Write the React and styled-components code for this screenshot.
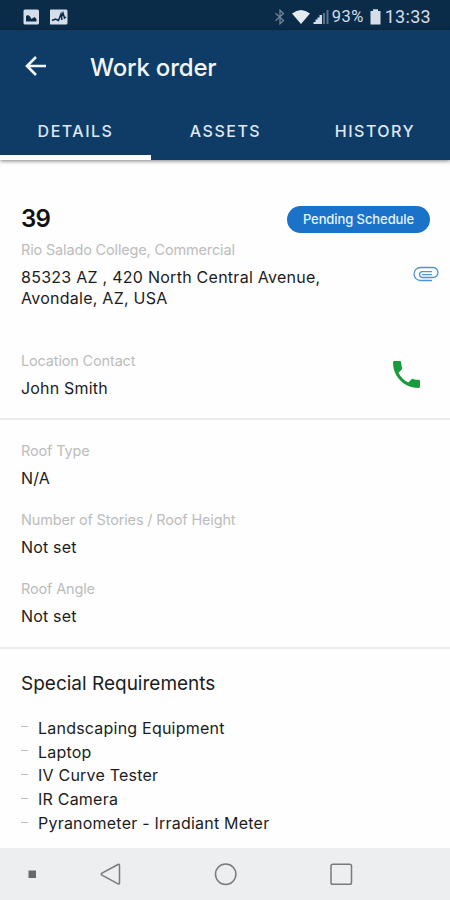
import React from 'react';
import styled, { createGlobalStyle } from 'styled-components';

const GlobalStyle = createGlobalStyle`
  * {
    box-sizing: border-box;
  }
  body {
    margin: 0;
    background-color: #fefefe;
    font-family: Inter, Roboto, sans-serif;
  }
`;

const Screen = styled.div`
  width: 450px;
  height: 900px;
  display: flex;
  flex-direction: column;
  overflow: hidden;
  background-color: #fefefe;
`;

const StatusBar = styled.div`
  height: 30px;
  flex: none;
  display: flex;
  align-items: center;
  justify-content: space-between;
  padding: 3px 19px 0 23px;
  background-color: #0a2c49;
  color: #d5dde8;
`;

const StatusGroup = styled.div`
  display: flex;
  align-items: center;
  gap: ${(props) => props.$gap}px;
`;

const StatusText = styled.span`
  font-family: Roboto, sans-serif;
  font-size: ${(props) => props.$size}px;
  letter-spacing: ${(props) => props.$spacing || 0}px;
  line-height: 20px;
`;

const Header = styled.header`
  height: 130px;
  flex: none;
  position: relative;
  background-color: #0e3c66;
  box-shadow: 0 1px 4px rgba(0, 0, 0, 0.5);
`;

const Toolbar = styled.div`
  height: 74px;
  display: flex;
  align-items: center;
  padding-left: 24px;
  color: #f3f6fb;
`;

const BackButton = styled.button`
  display: flex;
  width: 66px;
  padding: 0;
  border: none;
  background: none;
  color: inherit;
`;

const Title = styled.h1`
  margin: 0;
  padding-top: 1px;
  font-size: 24px;
  line-height: 30px;
  font-weight: 500;
  letter-spacing: -0.2px;
`;

const Tabs = styled.nav`
  height: 56px;
  display: grid;
  grid-template-columns: 151px 149px 150px;
`;

const Tab = styled.div`
  display: flex;
  align-items: center;
  justify-content: center;
  padding-top: 3px;
  border-bottom: 5px solid ${(props) => (props.$active ? '#ffffff' : 'transparent')};
  color: #dfe7f1;
  font-size: 16px;
  font-weight: 500;
  letter-spacing: 1.5px;
`;

const Section = styled.section`
  flex: none;
  height: ${(props) => props.$height}px;
  padding: ${(props) => props.$top}px 20px 0 21px;
  border-bottom: ${(props) => (props.$last ? 'none' : '2px solid #ececec')};
`;

const Row = styled.div`
  display: flex;
  justify-content: space-between;
`;

const OrderNumber = styled.div`
  font-size: 24px;
  line-height: 26px;
  font-weight: 600;
  letter-spacing: -0.7px;
  color: #111;
`;

const Badge = styled.div`
  width: 143px;
  height: 27px;
  border-radius: 14px;
  background-color: #1a73c8;
  color: #e9f4ff;
  font-size: 13px;
  line-height: 27px;
  font-weight: 500;
  letter-spacing: -0.08px;
  text-align: center;
`;

const Label = styled.div`
  font-size: 14.5px;
  line-height: 20px;
  color: #bcbcbc;
  letter-spacing: -0.16px;
`;

const Value = styled.div`
  font-size: 16px;
  line-height: 20.5px;
  color: #1c1c1c;
  letter-spacing: ${(props) => props.$spacing || 0.18}px;
`;

const Field = styled.div`
  height: 69px;
  display: flex;
  flex-direction: column;
  gap: 7px;
`;

const Address = styled(Field)`
  height: auto;
  padding-top: 7px;
`;

const Contact = styled(Row)`
  margin-top: 43px;
`;

const ClipSlot = styled.div`
  display: flex;
  padding-top: 33px;
  margin-right: -9px;
`;

const PhoneSlot = styled.div`
  display: flex;
  padding: 10px 10px 0 0;
`;

const SectionTitle = styled.h2`
  margin: 0 0 19px;
  font-size: 19px;
  line-height: 26px;
  font-weight: 400;
  color: #1c1c1c;
`;

const List = styled.ul`
  margin: 0;
  padding: 0;
  list-style: none;
`;

const ListItem = styled.li`
  display: flex;
  align-items: center;
  height: 23.8px;
  font-size: 16px;
  color: #1c1c1c;
  letter-spacing: 0.22px;

  &::before {
    content: '';
    width: 7px;
    height: 1px;
    margin: 0 10px 2px 0;
    background-color: #bdbdbd;
  }
`;

const NavBar = styled.footer`
  height: 52px;
  flex: none;
  margin-top: auto;
  display: flex;
  align-items: center;
  background-color: #eceeef;
`;

const BluetoothIcon = styled.svg`
  margin: 0 5px 0 0;
`;

const SignalIcon = styled.svg`
  margin: 0 2px 0 2px;
`;

const BatteryIcon = styled.svg`
  margin: 0 4px 0 6px;
`;

const StatusIcons = () => (
  <>
    <StatusGroup $gap={10}>
      <svg width="17" height="16" viewBox="0 0 17 16">
        <rect x="0.5" y="0.5" width="15.5" height="15" rx="1.5" fill="#d5dde8" />
        <path d="M3 12.5V7l2-1 2 1.5 1.5 2.500L11.500 8l2 2v2.500z" fill="#0a2c49" />
      </svg>
      <svg width="19" height="16" viewBox="0 0 19 16">
        <rect x="-0.5" y="0.5" width="18" height="15" rx="1.5" fill="#d5dde8" />
        <path d="M2 11.500l3.500-1.500 3 1.500L11 5l1 6M11.500 8L13 4l1.500 5 1.500-1" fill="none" stroke="#0a2c49" strokeWidth="1.5" />
      </svg>
    </StatusGroup>
    <StatusGroup $gap={0}>
      <BluetoothIcon width="12" height="16" viewBox="0 0 12 16">
        <path d="M1.5 4.200l8 7.300L6 14.700V1.300l3.500 3.200-8 7.300" fill="none" stroke="#718399" strokeWidth="1.300" />
      </BluetoothIcon>
      <svg width="20" height="16" viewBox="0 0 20 16">
        <path d="M1 4.500Q10-2.500 19 4.500L10 15z" fill="#e6ebf2" />
      </svg>
      <SignalIcon width="17" height="16" viewBox="0 0 17 16">
        <path d="M0.500 15v-2h2v-2.500h2V8.500h2V6h2.500v9z" fill="#d5dde8" />
        <path d="M10 15V4h2v11zM13.500 15V1h2v14z" fill="#5b728b" />
      </SignalIcon>
      <StatusText $size={16.5} $spacing={0.4}>93%</StatusText>
      <BatteryIcon width="11" height="16" viewBox="0 0 11 16">
        <path d="M0.5 2H3V0.300h5V2h2.500v13.500h-10z" fill="#d5dde8" />
      </BatteryIcon>
      <StatusText $size={18} $spacing={0.3}>13:33</StatusText>
    </StatusGroup>
  </>
);

const BackIcon = () => (
  <svg width="24" height="22" viewBox="0 0 24 22" fill="none" stroke="currentColor" strokeWidth="2.600">
    <path d="M22 10H3.500M12 1L3 10l9 9" />
  </svg>
);

const ClipIcon = () => (
  <svg width="26" height="16" viewBox="0 0 26 16" fill="none" stroke="#4d94d6" strokeWidth="1.300" strokeLinecap="round">
    <path d="M18.500 14.500H7.500a6.300 6.300 0 0 1 0-13H20a4.800 4.800 0 0 1 0 10H9.500a2.800 2.800 0 0 1 0-5.800H18.500" />
    <path d="M18.500 8.600H9.500" />
  </svg>
);

const PhoneIcon = () => (
  <svg width="27" height="27" viewBox="3 3 18 18" fill="#189b3a">
    <path d="M6.620 10.790c1.440 2.830 3.760 5.140 6.590 6.590l2.200-2.200c.27-.27.67-.36 1.020-.24 1.120.37 2.330.57 3.570.57.55 0 1 .45 1 1V20c0 .55-.45 1-1 1-9.390 0-17-7.610-17-17 0-.55.45-1 1-1h3.500c.55 0 1 .45 1 1 0 1.250.2 2.450.57 3.570.11.35.03.74-.25 1.020l-2.200 2.200z" />
  </svg>
);

const NavIcons = () => (
  <svg width="450" height="52" viewBox="0 0 450 52" fill="none" stroke="#777b7e" strokeWidth="1.5">
    <rect x="28.500" y="22.500" width="7.500" height="7.500" fill="#666a6d" stroke="none" />
    <path d="M118 16.500L102 25.200q-1.600 1 0 2L118 35.800q1.500.6 1.500-1V17.500q0-1.600-1.500-1z" />
    <circle cx="225.700" cy="26.200" r="10.200" />
    <rect x="331" y="16.200" width="20.500" height="20" rx="1.800" />
  </svg>
);

const roofFields = [
  { label: 'Roof Type', value: 'N/A' },
  { label: 'Number of Stories / Roof Height', value: 'Not set' },
  { label: 'Roof Angle', value: 'Not set' },
];

const requirements = [
  'Landscaping Equipment',
  'Laptop',
  'IV Curve Tester',
  'IR Camera',
  'Pyranometer - Irradiant Meter',
];

const App = () => {
  return (
    <Screen>
      <GlobalStyle />
      <StatusBar>
        <StatusIcons />
      </StatusBar>
      <Header>
        <Toolbar>
          <BackButton aria-label="Back">
            <BackIcon />
          </BackButton>
          <Title>Work order</Title>
        </Toolbar>
        <Tabs>
          <Tab $active>DETAILS</Tab>
          <Tab>ASSETS</Tab>
          <Tab>HISTORY</Tab>
        </Tabs>
      </Header>
      <Section $height={260} $top={46}>
        <Row>
          <OrderNumber>39</OrderNumber>
          <Badge>Pending Schedule</Badge>
        </Row>
        <Row>
          <Address>
            <Label>Rio Salado College, Commercial</Label>
            <Value $spacing={0.26}>
              85323 AZ , 420 North Central Avenue,
              <br />
              Avondale, AZ, USA
            </Value>
          </Address>
          <ClipSlot>
            <ClipIcon />
          </ClipSlot>
        </Row>
        <Contact>
          <Field>
            <Label>Location Contact</Label>
            <Value>John Smith</Value>
          </Field>
          <PhoneSlot>
            <PhoneIcon />
          </PhoneSlot>
        </Contact>
      </Section>
      <Section $height={229} $top={21}>
        {roofFields.map((field) => (
          <Field key={field.label}>
            <Label>{field.label}</Label>
            <Value>{field.value}</Value>
          </Field>
        ))}
      </Section>
      <Section $height={199} $top={22} $last>
        <SectionTitle>Special Requirements</SectionTitle>
        <List>
          {requirements.map((item) => (
            <ListItem key={item}>{item}</ListItem>
          ))}
        </List>
      </Section>
      <NavBar>
        <NavIcons />
      </NavBar>
    </Screen>
  );
};

export default App;
